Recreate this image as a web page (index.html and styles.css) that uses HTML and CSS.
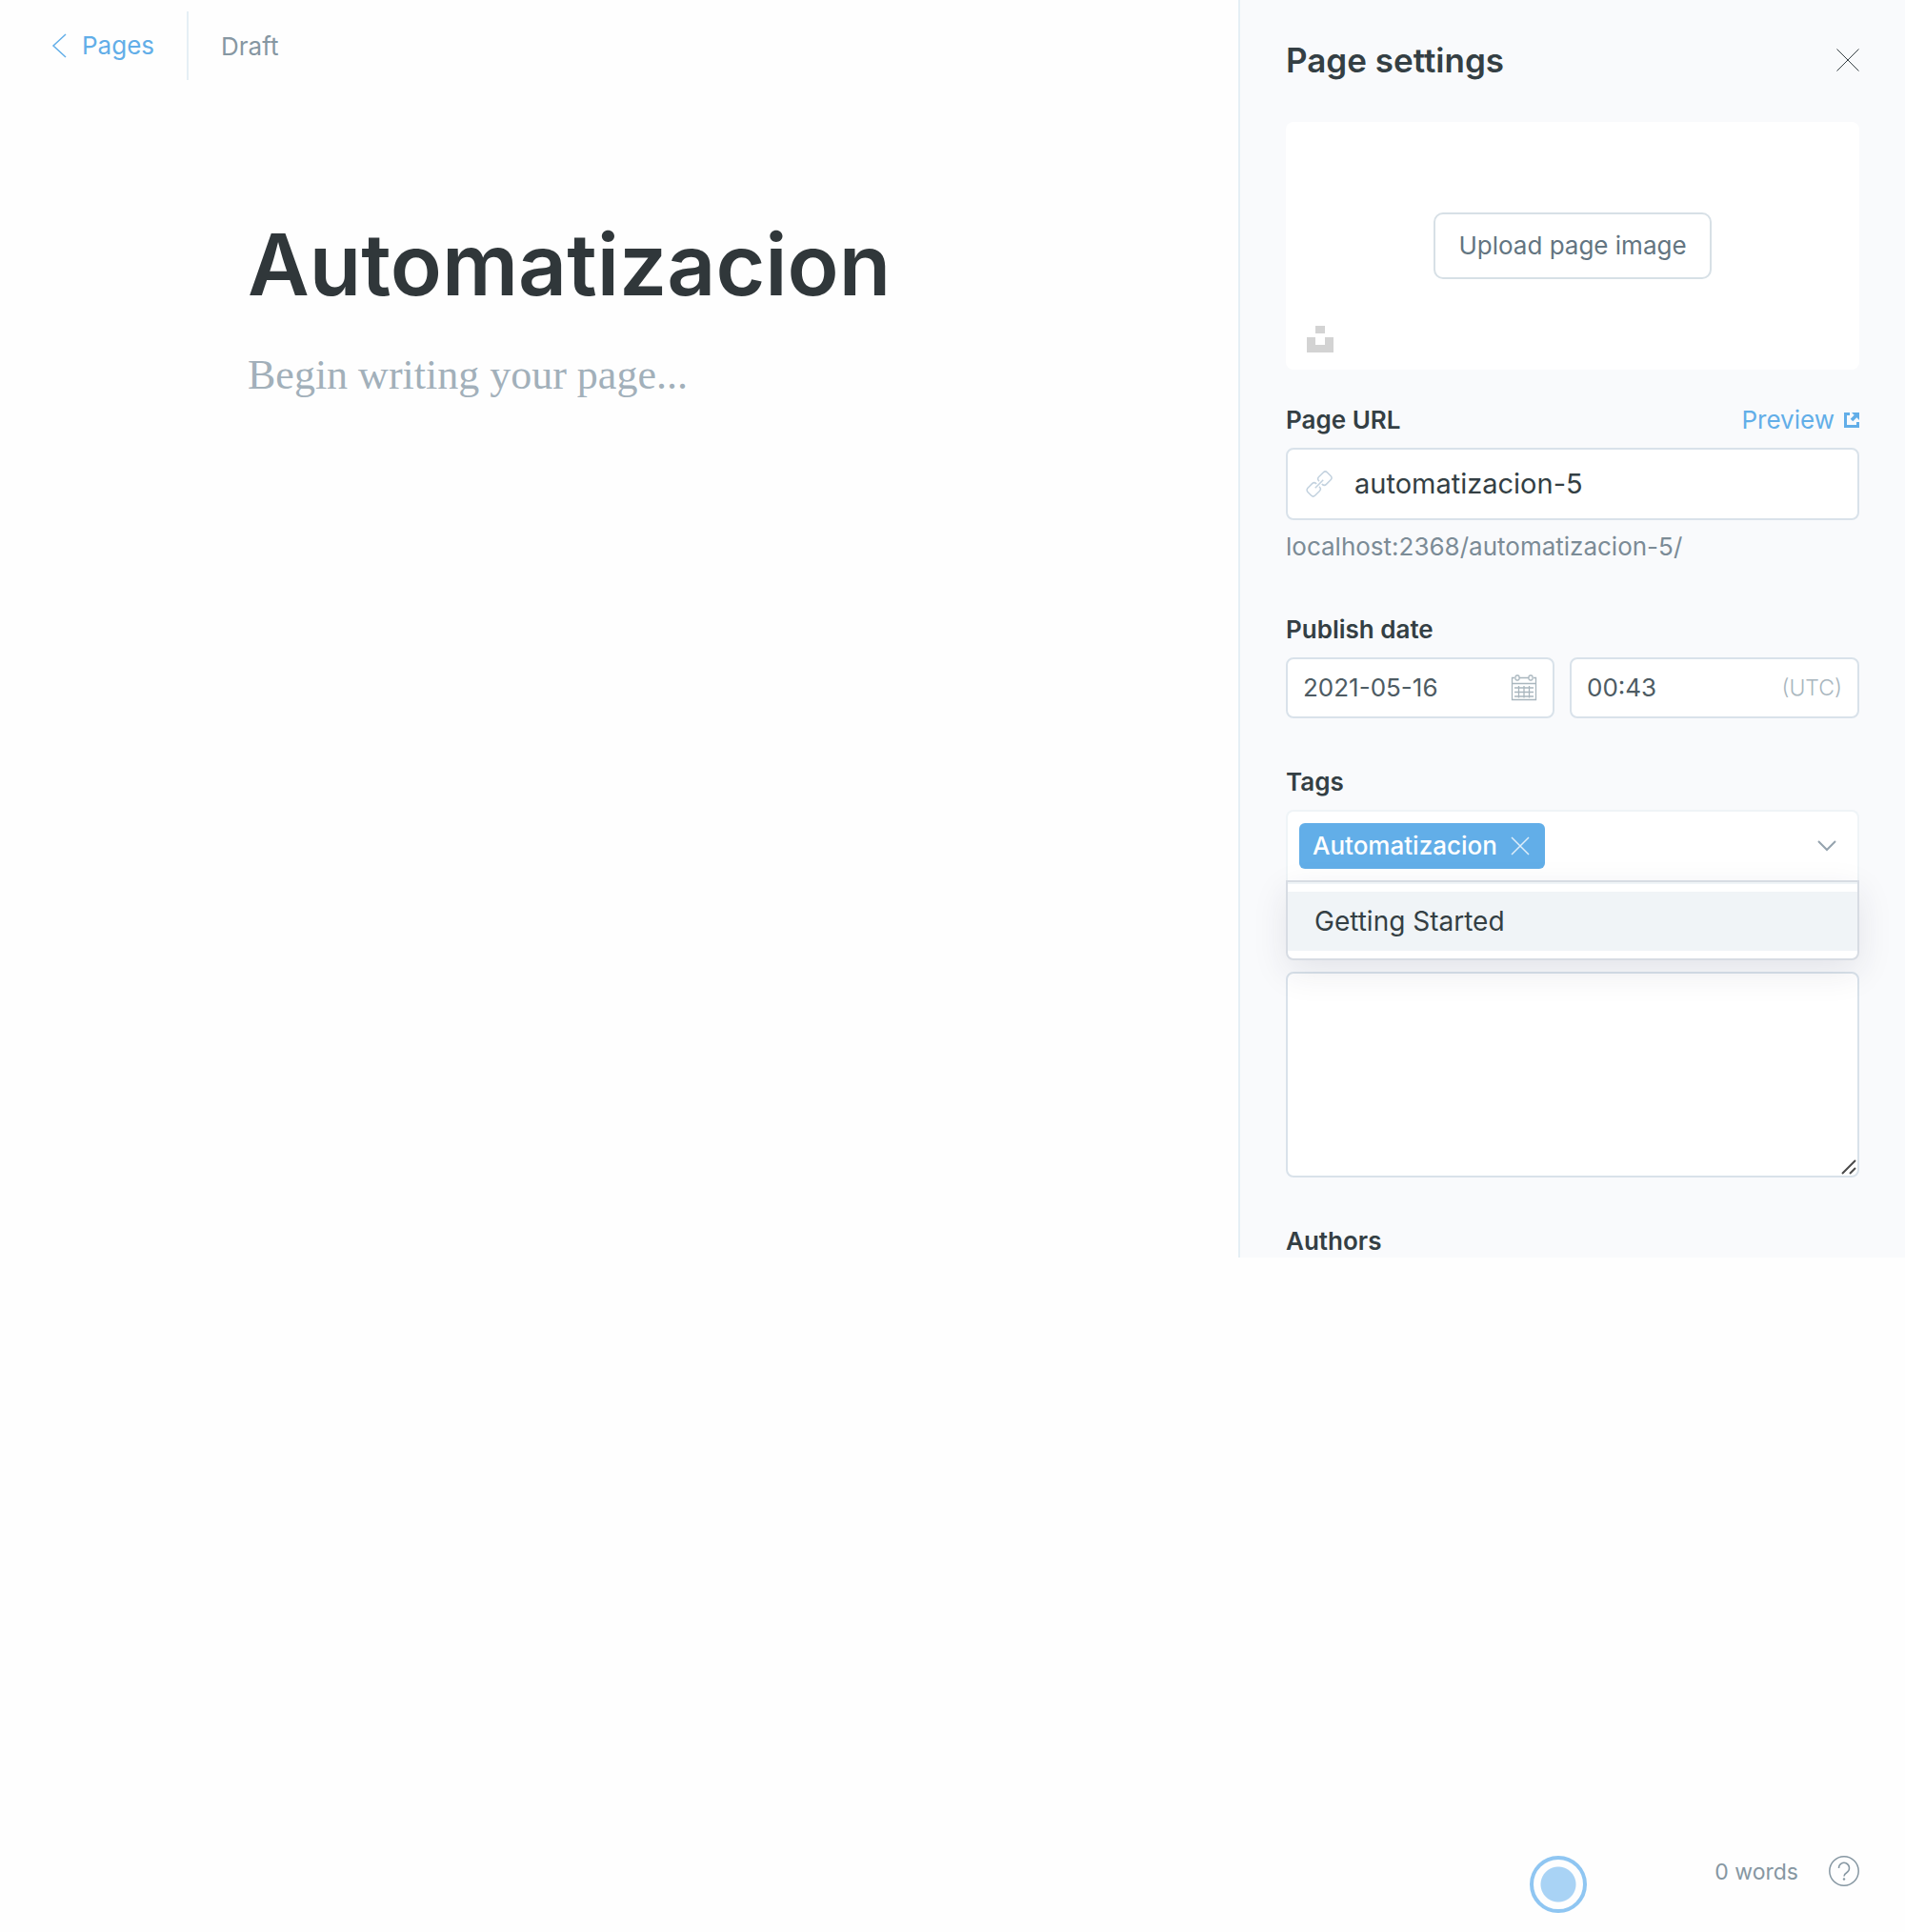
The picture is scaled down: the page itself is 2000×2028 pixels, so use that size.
FILE: index.html
```html
<!DOCTYPE html>
<html lang="en">
<head>
  <meta charset="utf-8">
  <meta name="viewport" content="width=device-width, initial-scale=1">
  <title>Page editor</title>
  <link rel="stylesheet" href="styles.css">
</head>
<body>
  <div class="app">
    <main class="editor">
      <header class="editor-header">
        <a class="back-link" href="#pages">
          <svg class="icon-back" viewBox="0 0 16 26" aria-hidden="true"><path d="M15 1 2 13l13 12"/></svg>
          Pages
        </a>
        <span class="status">Draft</span>
      </header>
      <div class="canvas">
        <input class="post-title" type="text" aria-label="Page title" value="Automatizacion">
        <textarea class="post-body" aria-label="Page content" rows="1" placeholder="Begin writing your page..."></textarea>
      </div>
    </main>

    <aside class="settings">
      <header class="settings-header">
        <h2 class="settings-title">Page settings</h2>
        <button class="plain-button" type="button" aria-label="Close">
          <svg class="icon-close" viewBox="0 0 24 24" aria-hidden="true"><path d="M0.500 0.500l23 23M23.500 0.500l-23 23"/></svg>
        </button>
      </header>

      <div class="uploader">
        <button class="upload-button" type="button">Upload page image</button>
        <button class="plain-button unsplash" type="button" aria-label="Unsplash">
          <svg class="icon-unsplash" viewBox="0 0 28 28" aria-hidden="true"><path d="M9 0h10v8H9zM0 12h9v8h10v-8h9v16H0z"/></svg>
        </button>
      </div>

      <form class="fields">
        <div class="field">
          <div class="label-row">
            <label class="label" for="url">Page URL</label>
            <a class="preview" href="#preview">Preview
              <svg class="icon-external" viewBox="0 0 16 16" aria-hidden="true"><path class="frame" d="M6 1.500H1.500v13h13V10"/><path class="arrow" d="M8 0h8v8l-2.700-2.700-4 4-2.600-2.600 4-4z"/></svg>
            </a>
          </div>
          <div class="control control-large">
            <svg class="icon-link" viewBox="0 0 26 26" aria-hidden="true"><g transform="rotate(-45 13 13)"><path d="M11 15v.500a3 3 0 0 1-3 3H1.500a3 3 0 0 1-3-3v-5a3 3 0 0 1 3-3H8a3 3 0 0 1 3 3v.500M15 11v-.500a3 3 0 0 1 3-3h6.500a3 3 0 0 1 3 3v5a3 3 0 0 1-3 3H18a3 3 0 0 1-3-3V15M7 13h12"/></g></svg>
            <input class="input input-large" id="url" type="text" value="automatizacion-5">
          </div>
          <p class="hint">localhost:2368/automatizacion-5/</p>
        </div>

        <div class="field">
          <label class="label" for="date">Publish date</label>
          <div class="date-row">
            <div class="control">
              <input class="input" id="date" type="text" value="2021-05-16">
              <svg class="icon-calendar" viewBox="0 0 28 28" aria-hidden="true"><path d="M4 3.500H1.500V26.500h25V3.500H24M9 3.500h10M1.500 9.500h25M4 14h20M4 18.500h20M4 23h20M8.500 12v12.500M14 12v12.500M19.500 12v12.500"/><rect x="5" y="1" width="4" height="5" rx="1.500"/><rect x="19" y="1" width="4" height="5" rx="1.500"/></svg>
            </div>
            <div class="control">
              <input class="input" type="text" aria-label="Publish time" value="00:43">
              <span class="zone">(UTC)</span>
            </div>
          </div>
        </div>

        <div class="field">
          <label class="label" for="tags">Tags</label>
          <div class="select">
            <div class="select-trigger">
              <span class="tag">Automatizacion
                <button class="plain-button" type="button" aria-label="Remove Automatizacion">
                  <svg class="icon-remove" viewBox="0 0 20 20" aria-hidden="true"><path d="M1 1l18 18M19 1 1 19"/></svg>
                </button>
              </span>
              <input class="input" id="tags" type="text">
              <svg class="icon-chevron" viewBox="0 0 20 12" aria-hidden="true"><path d="M1 1l9 9 9-9"/></svg>
            </div>
            <ul class="options" role="listbox" aria-label="Tags">
              <li class="option" role="option" aria-selected="false">Getting Started</li>
            </ul>
          </div>
        </div>

        <div class="excerpt">
          <textarea class="excerpt-input" aria-label="Excerpt"></textarea>
          <svg class="icon-resize" viewBox="0 0 16 16" aria-hidden="true"><path d="M1 15 15 1M9 15l6-6"/></svg>
        </div>

        <div class="label">Authors</div>
      </form>
    </aside>

    <footer class="footer">
      <button class="plain-button launcher" type="button" aria-label="Record"></button>
      <span class="words">0 words</span>
      <a class="help" href="#help" aria-label="Help">
        <svg class="icon-help" viewBox="0 0 32 32" aria-hidden="true"><circle cx="16" cy="16" r="15.200"/><path d="M10.500 13a5.500 5.500 0 1 1 8.500 4.500c-2 1.300-3 2-3 4"/><circle class="dot" cx="16" cy="24.500" r="1.200"/></svg>
      </a>
    </footer>
  </div>
</body>
</html>
```
FILE: styles.css
```css
* { box-sizing: border-box; }

body {
  margin: 0;
  background: #fefefe;
  color: #343f44;
  font-family: Inter, "Liberation Sans", sans-serif;
  font-size: 26px;
  line-height: 34px;
}

a {
  color: inherit;
  text-decoration: none;
}

svg {
  display: block;
  flex: none;
  fill: none;
  stroke: currentColor;
}

input, textarea, button {
  font: inherit;
  color: inherit;
}

.plain-button {
  padding: 0;
  border: 0;
  background: none;
}

.app {
  display: grid;
  grid-template-columns: minmax(0, 65fr) minmax(0, 35fr);
  grid-template-rows: 1fr auto;
  min-height: 100vh;
}

/* Editor */
.editor-header {
  display: flex;
  padding: 12px 54px;
}

.back-link {
  display: flex;
  align-items: center;
  gap: 16px;
  height: 72px;
  padding-right: 34px;
  border-right: 2px solid #e5eff5;
  color: #62aee8;
}

.icon-back {
  width: 16px;
  height: 26px;
  stroke-width: 1.5;
}

.status {
  padding: 20px 34px;
  color: #8697a2;
}

.canvas {
  display: flex;
  flex-direction: column;
  padding: 124px 260px 0;
}

.post-title {
  width: 100%;
  padding: 0;
  border: 0;
  background: none;
  color: #30373a;
  font-size: 89px;
  font-weight: 600;
  line-height: 112px;
  outline: 0;
}

.post-body {
  height: 60px;
  margin-top: 30px;
  padding: 0;
  border: 0;
  background: none;
  font-family: "Liberation Serif", serif;
  font-size: 44px;
  line-height: 60px;
  resize: none;
  outline: 0;
}

.post-body::placeholder { color: #a2b0ba; }

/* Settings panel */
.settings {
  align-self: start;
  padding: 0 48px;
  border-left: 2px solid #e5eff5;
  background: #f9fafc;
}

.settings-header {
  display: flex;
  align-items: center;
  justify-content: space-between;
  height: 128px;
  padding-bottom: 2px;
}

.settings-title {
  margin: 0;
  font-size: 35px;
  font-weight: 600;
  line-height: 40px;
}

.icon-close { width: 24px; height: 24px; }

.uploader {
  position: relative;
  display: flex;
  align-items: center;
  justify-content: center;
  height: 260px;
  border-radius: 8px;
  background: #fff;
}

.upload-button {
  height: 70px;
  padding: 0 24px;
  border: 2px solid #d7e0e6;
  border-radius: 10px;
  background: #fff;
  color: #637581;
}

.unsplash {
  position: absolute;
  bottom: 18px;
  left: 22px;
}

.icon-unsplash {
  width: 28px;
  height: 28px;
  fill: #d3d3d3;
  stroke: none;
}

.fields { padding-top: 36px; }

.field { margin-bottom: 50px; }

.label {
  display: block;
  font-weight: 600;
}

.label-row {
  display: flex;
  justify-content: space-between;
}

.preview {
  display: flex;
  align-items: center;
  gap: 10px;
  color: #62aee8;
}

.icon-external { width: 16px; height: 16px; }
.icon-external .frame { stroke-width: 3; }
.icon-external .arrow { fill: currentColor; stroke: none; }

.control {
  display: flex;
  align-items: center;
  height: 64px;
  margin-top: 12px;
  padding: 0 16px;
  border: 2px solid #d9e2ea;
  border-radius: 8px;
  background: #fff;
  color: #4d5b63;
}

.control-large {
  gap: 24px;
  height: 76px;
  padding: 0 20px;
  color: #343f44;
}

.input {
  flex: 1;
  min-width: 0;
  padding: 0;
  border: 0;
  background: none;
  outline: 0;
}

.input-large { font-size: 29px; }

.icon-link {
  width: 26px;
  height: 26px;
  color: #c3d2df;
  stroke-width: 1.5;
  overflow: visible;
}

.hint {
  margin: 8px 0 0;
  color: #7b8b96;
  line-height: 40px;
}

.date-row {
  display: grid;
  grid-template-columns: minmax(0, 282fr) minmax(0, 304fr);
  gap: 16px;
}

.icon-calendar {
  width: 28px;
  height: 28px;
  color: #a9b6be;
  stroke-width: 1.3;
}

.zone {
  color: #a9b6be;
  font-size: 23px;
  font-weight: 300;
}

.select {
  position: relative;
  margin-top: 12px;
}

.select-trigger {
  display: flex;
  align-items: center;
  height: 74px;
  padding: 0 22px 0 12px;
  border: 2px solid #eff4f7;
  border-bottom: 0;
  border-radius: 8px 8px 0 0;
  background: #fff;
}

.tag {
  display: flex;
  align-items: center;
  gap: 14px;
  height: 48px;
  padding: 0 16px 0 14px;
  border-radius: 6px;
  background: #62aee8;
  color: #fff;
  font-weight: 500;
}

.icon-remove {
  width: 20px;
  height: 20px;
  stroke-width: 1.5;
  opacity: 0.8;
}

.icon-chevron {
  width: 20px;
  height: 12px;
  color: #95a3ae;
  stroke-width: 2;
}

.options {
  position: absolute;
  z-index: 1;
  top: 100%;
  right: 0;
  left: 0;
  margin: 0;
  padding: 10px 0 8px;
  border: 2px solid #d7dce3;
  border-radius: 0 0 8px 8px;
  background: #fff;
  box-shadow: inset 0 2px #eff4f7, 0 12px 36px rgba(39, 44, 64, 0.1);
  list-style: none;
}

.option {
  padding: 14px 28px;
  background: #f0f4f7;
  font-size: 28px;
}

.excerpt {
  position: relative;
  margin: 96px 0 50px;
}

.excerpt-input {
  display: block;
  width: 100%;
  height: 216px;
  padding: 16px;
  border: 2px solid #d9e2ea;
  border-radius: 8px;
  background: #fff;
  resize: none;
}

.icon-resize {
  position: absolute;
  right: 3px;
  bottom: 3px;
  width: 16px;
  height: 16px;
  color: #4a4a4a;
  stroke-width: 2;
  pointer-events: none;
}

/* Footer */
.footer {
  grid-column: 1 / -1;
  display: flex;
  align-items: flex-start;
  justify-content: flex-end;
  padding: 0 48px 20px;
  color: #8697a2;
}

.launcher {
  width: 60px;
  height: 60px;
  margin-right: 134px;
  border: 4px solid #8fc6f2;
  border-radius: 50%;
  background: radial-gradient(circle, #a9d3f5 18px, transparent 19px);
}

.words {
  margin-right: 32px;
  font-size: 23px;
}

.icon-help {
  width: 32px;
  height: 32px;
  stroke-width: 1.5;
}

.icon-help .dot { fill: currentColor; stroke: none; }
```
